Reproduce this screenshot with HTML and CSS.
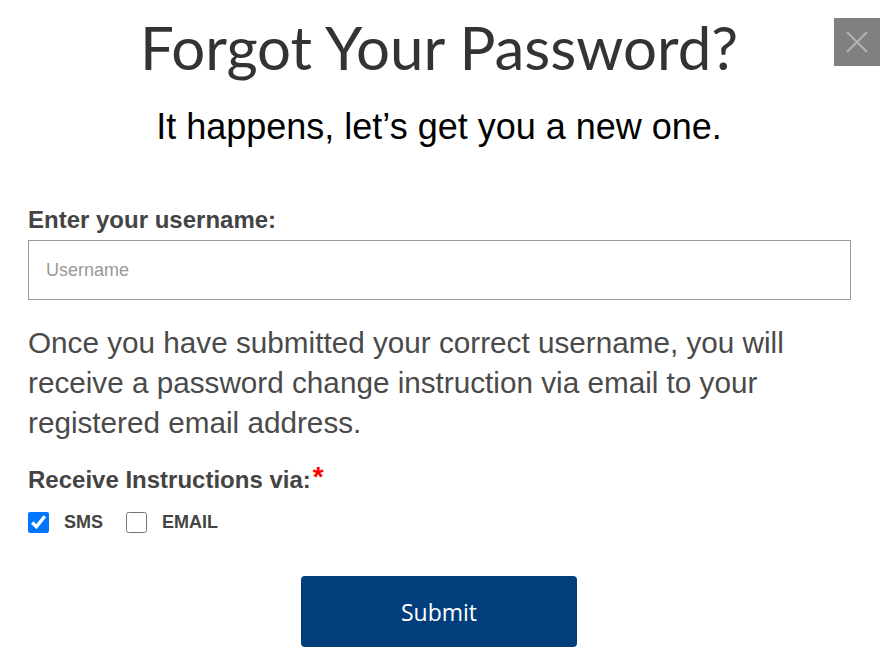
FILE: index.html
```
<!DOCTYPE html>
<html>
<head>
<meta charset="utf-8">
<link rel="stylesheet" href="styles.css">
</head>
<body>
<div class="modal">
  <button class="close" aria-label="Close">
    <svg width="22" height="22" viewBox="0 0 22 22"><path d="M1 1 L21 21 M21 1 L1 21" stroke="#b2b2b2" stroke-width="2" fill="none"/></svg>
  </button>
  <h1 class="title">Forgot Your Password?</h1>
  <p class="subtitle">It happens, let’s get you a new one.</p>
  <form class="form">
    <label class="label" for="username">Enter your username:</label>
    <input class="input" id="username" type="text" placeholder="Username">
    <p class="info">Once you have submitted your correct username, you will receive a password change instruction via email to your registered email address.</p>
    <div class="label">Receive Instructions via:<span class="req">*</span></div>
    <div class="options">
      <label class="opt"><input type="checkbox" class="check" checked><span>SMS</span></label>
      <label class="opt"><input type="checkbox" class="check"><span>EMAIL</span></label>
    </div>
    <div class="actions">
      <button type="button" class="submit">Submit</button>
    </div>
  </form>
</div>
</body>
</html>
```
FILE: styles.css
```
html, body {
  margin: 0;
  padding: 0;
  background: #fff;
}
body {
  font-family: "Liberation Sans", Arial, sans-serif;
}
.modal {
  position: relative;
  padding: 13px 31px 0 28px;
}
.close {
  position: absolute;
  top: 18px;
  left: 834px;
  width: 46px;
  height: 48px;
  background: #808080;
  border: none;
  padding: 0;
  display: flex;
  align-items: center;
  justify-content: center;
}
.title {
  margin: 0;
  text-align: center;
  font-family: Lato, sans-serif;
  font-weight: 400;
  font-size: 60px;
  line-height: 68px;
  color: #333;
}
.subtitle {
  margin: 26px 0 0;
  text-align: center;
  font-size: 36px;
  line-height: 40px;
  color: #000;
}
.form {
  margin-top: 59px;
}
.label {
  display: block;
  font-weight: 700;
  font-size: 24px;
  line-height: 28px;
  color: #444;
}
.req {
  color: #f00;
  font-size: 28px;
  vertical-align: top;
  line-height: 22px;
  margin-left: 2px;
}
.input {
  display: block;
  box-sizing: border-box;
  width: 823px;
  height: 60px;
  margin-top: 6px;
  border: 1px solid #9a9a9a;
  padding: 0 17px;
  font-family: "Liberation Sans", Arial, sans-serif;
  font-size: 18px;
  color: #333;
  outline: none;
}
.input::placeholder {
  color: #999;
}
.info {
  margin: 23px 0 0;
  font-size: 29.7px;
  line-height: 40px;
  color: #4a4a4a;
}
.info + .label {
  margin-top: 23px;
}
.options {
  display: flex;
  gap: 23px;
  margin-top: 17px;
  height: 22px;
}
.opt {
  display: flex;
  align-items: center;
  gap: 15px;
  font-weight: 700;
  font-size: 18px;
  line-height: 22px;
  color: #444;
}
.check {
  width: 21px;
  height: 21px;
  margin: 0;
}
.actions {
  display: flex;
  justify-content: center;
  margin-top: 43px;
}
.submit {
  width: 276px;
  height: 71px;
  background: #023e7b;
  border: none;
  border-radius: 4px;
  color: #fff;
  font-family: "Open Sans", sans-serif;
  font-size: 23px;
  font-weight: 500;
}
```
